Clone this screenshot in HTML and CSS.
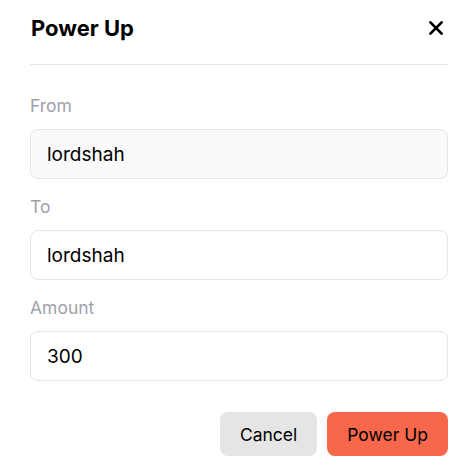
FILE: index.html
```html
<!DOCTYPE html>
<html lang="en">
<head>
<meta charset="utf-8">
<title>Power Up</title>
<link rel="stylesheet" href="styles.css">
</head>
<body>
<div class="modal">
  <div class="modal-header">
    <h2 class="modal-title">Power Up</h2>
    <button class="close-btn" aria-label="Close">
      <svg width="14" height="14" viewBox="0 0 14 14" aria-hidden="true">
        <path d="M1.5 1.5 L12.5 12.5 M12.5 1.5 L1.5 12.5" stroke="#000" stroke-width="2.6" stroke-linecap="square" fill="none"/>
      </svg>
    </button>
  </div>
  <form class="form">
    <div class="field">
      <label class="field-label">From</label>
      <div class="input input-disabled">lordshah</div>
    </div>
    <div class="field">
      <label class="field-label">To</label>
      <div class="input">lordshah</div>
    </div>
    <div class="field">
      <label class="field-label">Amount</label>
      <div class="input">300</div>
    </div>
    <div class="actions">
      <button type="button" class="btn btn-cancel">Cancel</button>
      <button type="button" class="btn btn-primary">Power Up</button>
    </div>
  </form>
</div>
</body>
</html>
```
FILE: styles.css
```css
html, body {
  margin: 0;
  padding: 0;
  background: #ffffff;
}
body {
  font-family: Inter, "Noto Sans", sans-serif;
  color: #000;
}
.modal {
  padding: 0 12px 0 30px;
}
.modal-header {
  display: flex;
  align-items: center;
  justify-content: space-between;
  height: 56px;
  padding-bottom: 8px;
  border-bottom: 1px solid #e5e7eb;
}
.modal-title {
  margin: 0;
  font-size: 22px;
  font-weight: 700;
  line-height: 28px;
  padding-left: 1px;
}
.close-btn {
  border: 0;
  background: none;
  padding: 0;
  margin-right: 5px;
  width: 14px;
  height: 14px;
  display: flex;
}
.form {
  display: flex;
  flex-direction: column;
  gap: 16px;
  padding-top: 29px;
}
.field {
  display: flex;
  flex-direction: column;
}
.field-label {
  font-size: 17.5px;
  line-height: 24px;
  color: #a1a1aa;
  margin-bottom: 11px;
}
.input {
  height: 48px;
  border: 1px solid #e5e5e5;
  border-radius: 8px;
  padding: 0 16px;
  display: flex;
  align-items: center;
  font-size: 19px;
  background: #fff;
}
.input-disabled {
  background: #fafafa;
}
.actions {
  display: flex;
  justify-content: flex-end;
  gap: 10px;
  margin-top: 15px;
}
.btn {
  font-family: inherit;
  height: 44px;
  border: 0;
  border-radius: 8px;
  padding: 0 20px;
  font-size: 17.5px;
  color: #000;
}
.btn-cancel {
  background: #e5e5e5;
}
.btn-primary {
  background: #f6674b;
}
```
